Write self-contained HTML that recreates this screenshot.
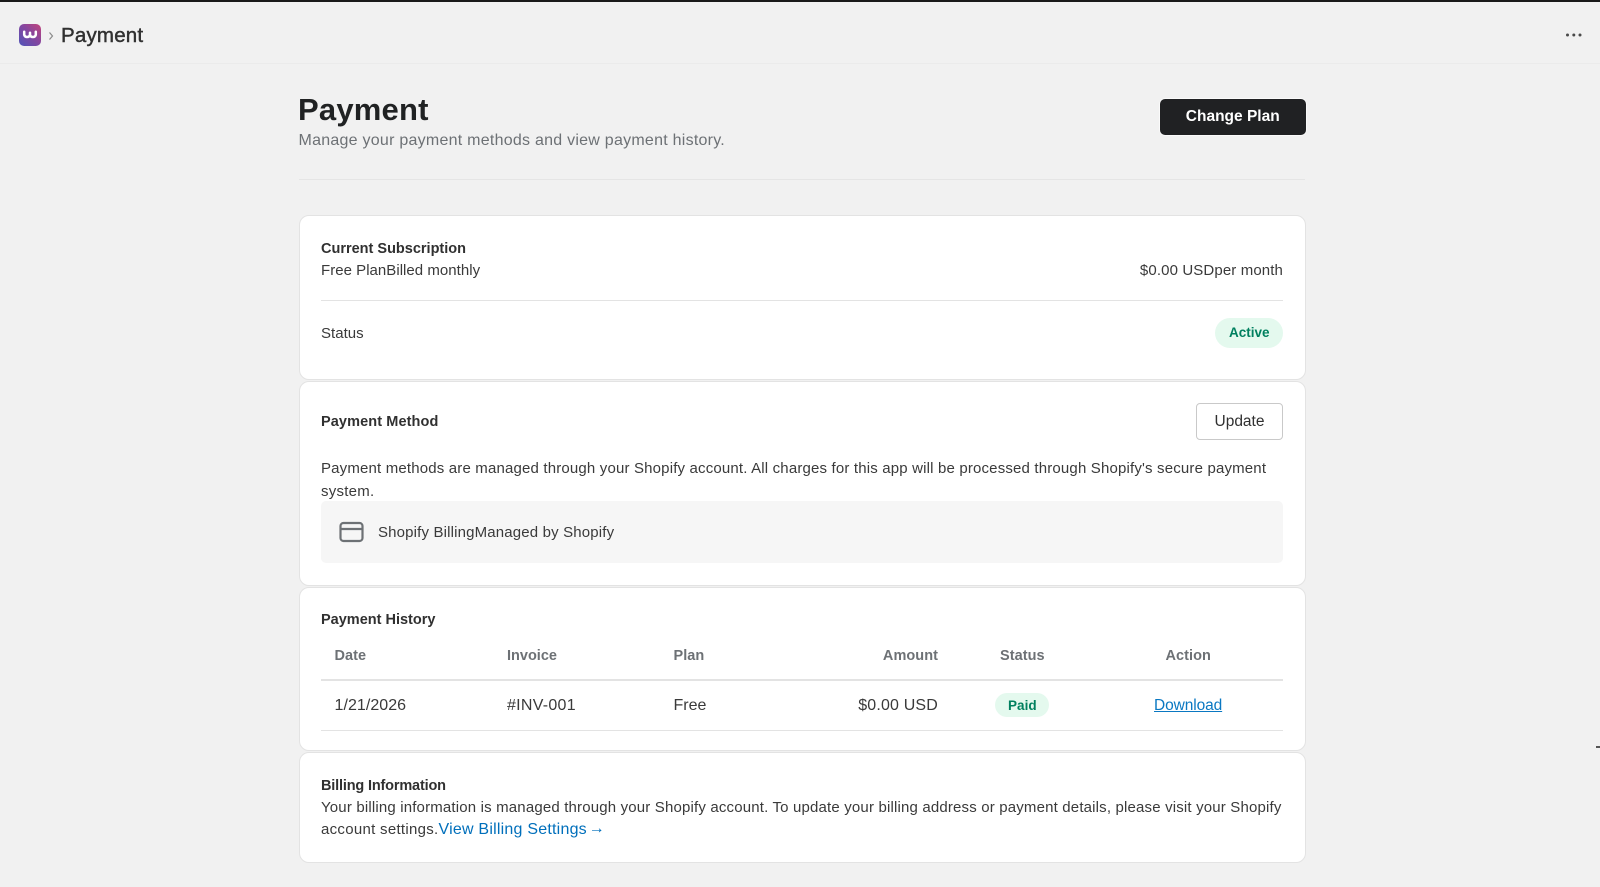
<!DOCTYPE html>
<html lang="en">
<head>
<meta charset="utf-8">
<title>Payment</title>
<style>
html,body{margin:0;padding:0;width:1600px;height:887px;overflow:hidden;background:#f1f1f1;}
body{position:relative;font-family:"Liberation Sans",Arial,sans-serif;color:#303030;}
#w{position:absolute;left:0;top:0;width:1600px;height:887px;filter:blur(.3px);}
.t{position:absolute;white-space:nowrap;line-height:0;font-size:15px;letter-spacing:.16px;color:#3a3a3a;}
.b{font-weight:bold;font-size:14.5px;color:#303030;}
.card{position:absolute;left:298.5px;width:1007px;background:#fff;border:1px solid #e3e3e3;border-radius:10px;box-sizing:border-box;}
.line{position:absolute;background:#e3e3e3;height:1px;}
.badge{position:absolute;background:#e4f9ee;border-radius:15px;}
.th{color:#6d7175;letter-spacing:.05px;}
</style>
</head>
<body>
<div id="w">
<div style="position:absolute;left:0;top:0;width:1600px;height:2px;background:#1a1a1a"></div>
<div class="line" style="left:0;top:63px;width:1600px;background:#ebebeb"></div>

<svg style="position:absolute;left:19px;top:24px" width="22" height="22" viewBox="0 0 22 22">
<defs><linearGradient id="g" x1="0" y1="1" x2="1" y2="0"><stop offset="0" stop-color="#4f54b8"/><stop offset=".55" stop-color="#86469f"/><stop offset="1" stop-color="#c2447a"/></linearGradient></defs>
<rect width="22" height="22" rx="5" fill="url(#g)"/>
<path d="M5.2 7.8v3a3 3 0 0 0 5.8 0V8.8v2a3 3 0 0 0 5.8 0v-3" fill="none" stroke="#fff" stroke-width="2.5" stroke-linecap="round" stroke-linejoin="round"/>
</svg>
<svg style="position:absolute;left:48px;top:31px" width="6" height="10" viewBox="0 0 6 10"><path d="M1.5 1.5 4.5 5 1.5 8.5" fill="none" stroke="#8a8a8a" stroke-width="1.2"/></svg>
<div class="t" style="left:61px;top:36px;font-size:20.5px;letter-spacing:.2px;-webkit-text-stroke:.45px #303030;color:#303030">Payment</div>
<svg style="position:absolute;left:1565px;top:32px" width="18" height="6" viewBox="0 0 18 6"><circle cx="2.5" cy="3" r="1.5" fill="#4a4a4a"/><circle cx="8.8" cy="3" r="1.5" fill="#4a4a4a"/><circle cx="15" cy="3" r="1.5" fill="#4a4a4a"/></svg>

<div class="t b" style="left:298px;top:110px;font-size:31px;letter-spacing:.2px;color:#202223">Payment</div>
<div class="t" style="left:298.5px;top:141px;font-size:16px;letter-spacing:.25px;color:#6d7175">Manage your payment methods and view payment history.</div>
<div style="position:absolute;left:1160px;top:99px;width:145.5px;height:36px;box-sizing:border-box;background:#202123;box-shadow:0 0 0 .6px #fff;border-radius:5px;color:#fff;font-weight:bold;font-size:15.5px;line-height:35px;text-align:center">Change Plan</div>
<div class="line" style="left:299px;top:179px;width:1006px;background:#e5e5e5"></div>

<div class="card" style="top:215px;height:165px"></div>
<div class="card" style="top:381px;height:205px"></div>
<div class="card" style="top:587px;height:164px"></div>
<div class="card" style="top:752px;height:111px"></div>

<div class="t b" style="left:321px;top:249px;letter-spacing:0">Current Subscription</div>
<div class="t" style="left:321px;top:271px;letter-spacing:.03px">Free PlanBilled monthly</div>
<div class="t" style="right:317px;top:271px;letter-spacing:.12px">$0.00 USDper month</div>
<div class="line" style="left:321px;top:300px;width:962px"></div>
<div class="t" style="left:321px;top:334px;letter-spacing:.03px">Status</div>
<div class="badge" style="left:1215px;top:318px;width:68px;height:30px"></div>
<div class="t b" style="left:1229px;top:333px;font-size:13.5px;letter-spacing:0;color:#00805f">Active</div>

<div class="t b" style="left:321px;top:422px;letter-spacing:.1px">Payment Method</div>
<div style="position:absolute;left:1196px;top:403px;width:87px;height:37px;box-sizing:border-box;border:1px solid #c9c9c9;border-radius:4px;background:#fff;font-size:15.5px;line-height:36px;text-align:center;color:#303030">Update</div>
<div class="t" style="left:321px;top:469px;letter-spacing:.17px">Payment methods are managed through your Shopify account. All charges for this app will be processed through Shopify's secure payment</div>
<div class="t" style="left:321px;top:492px;letter-spacing:.25px">system.</div>
<div style="position:absolute;left:321px;top:501px;width:962px;height:62px;background:#f6f6f6;border-radius:5px"></div>
<svg style="position:absolute;left:339px;top:521px" width="25" height="22" viewBox="0 0 25 22"><rect x="1.5" y="2" width="22" height="18" rx="3" fill="none" stroke="#6d7175" stroke-width="2.2"/><path d="M1.5 8h22" stroke="#6d7175" stroke-width="2.2"/></svg>
<div class="t" style="left:378px;top:533px;letter-spacing:.16px">Shopify BillingManaged by Shopify</div>

<div class="t b" style="left:321px;top:620px;letter-spacing:0">Payment History</div>
<div class="t b th" style="left:334.5px;top:656px;color:#6d7175">Date</div>
<div class="t b th" style="left:507px;top:656px;color:#6d7175;letter-spacing:0">Invoice</div>
<div class="t b th" style="left:673.5px;top:656px;color:#6d7175">Plan</div>
<div class="t b th" style="right:662px;top:656px;color:#6d7175">Amount</div>
<div class="t b th" style="left:1000px;top:656px;color:#6d7175">Status</div>
<div class="t b th" style="left:1165.5px;top:656px;color:#6d7175">Action</div>
<div class="line" style="left:321px;top:679px;width:962px;height:2px;background:#e3e3e3"></div>
<div class="t" style="left:334.5px;top:706px;font-size:16px;letter-spacing:.05px">1/21/2026</div>
<div class="t" style="left:507px;top:706px;font-size:16px;letter-spacing:.27px">#INV-001</div>
<div class="t" style="left:673.5px;top:706px;font-size:16px;letter-spacing:0">Free</div>
<div class="t" style="right:662px;top:706px;font-size:16px;letter-spacing:.17px">$0.00 USD</div>
<div class="badge" style="left:995px;top:693px;width:54px;height:24px"></div>
<div class="t b" style="left:1008px;top:706px;font-size:13.5px;letter-spacing:.05px;color:#00805f">Paid</div>
<div class="t" style="left:1154px;top:706px;font-size:15.5px;letter-spacing:-.1px;color:#0a78c2;text-decoration:underline">Download</div>
<div class="line" style="left:321px;top:730px;width:962px"></div>

<div class="t b" style="left:321px;top:786px;letter-spacing:-.17px">Billing Information</div>
<div class="t" style="left:321px;top:808px;letter-spacing:.17px">Your billing information is managed through your Shopify account. To update your billing address or payment details, please visit your Shopify</div>
<div class="t" style="left:321px;top:830px;letter-spacing:.29px">account settings.<span style="color:#006fbb;font-size:16px;letter-spacing:.22px">View Billing Settings <span style="position:relative;left:-3px;top:-1px">→</span></span></div>

<div style="position:absolute;left:1596px;top:746px;width:4px;height:2px;background:#555"></div>
</div>
</body>
</html>
